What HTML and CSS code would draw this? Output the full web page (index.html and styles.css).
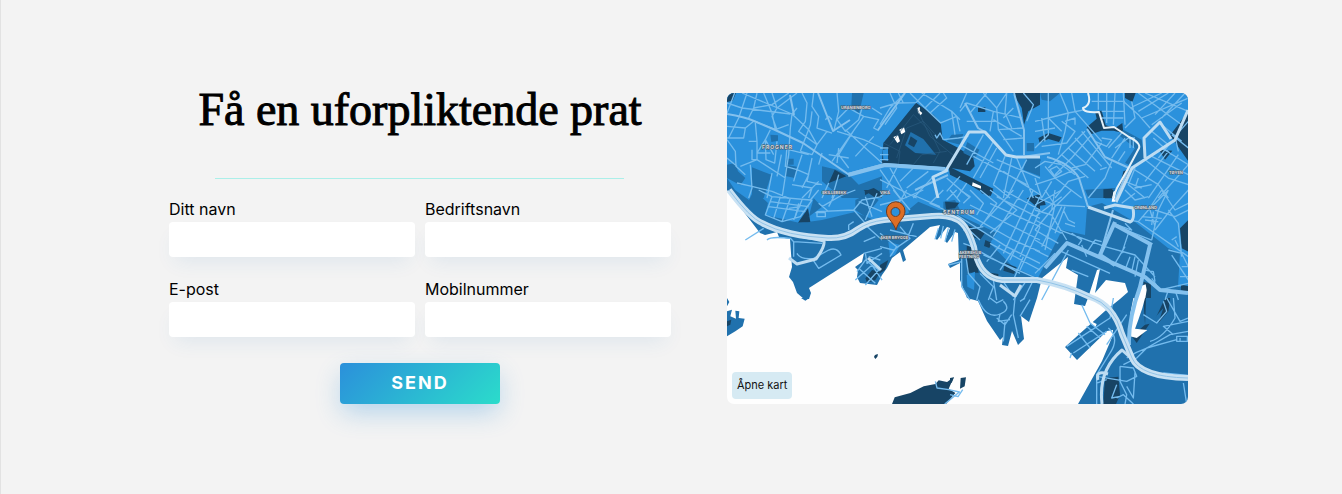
FILE: index.html
```html
<!DOCTYPE html>
<html lang="no">
<head>
<meta charset="utf-8">
<meta name="viewport" content="width=device-width, initial-scale=1">
<title>Få en uforpliktende prat</title>
<link rel="stylesheet" href="styles.css">
</head>
<body>
<main class="contact">
  <section class="contact-main">
    <h1 class="title">Få en uforpliktende prat</h1>
    <hr class="rule">
    <form class="form">
      <div class="fields">
        <div class="field"><label for="name">Ditt navn</label><input id="name" type="text"></div>
        <div class="field"><label for="company">Bedriftsnavn</label><input id="company" type="text"></div>
        <div class="field"><label for="email">E-post</label><input id="email" type="email"></div>
        <div class="field"><label for="phone">Mobilnummer</label><input id="phone" type="tel"></div>
      </div>
      <button class="send" type="submit">SEND</button>
    </form>
  </section>
  <section class="map">
    <svg class="map-art" viewBox="727 93 461 311" preserveAspectRatio="xMidYMid slice" role="img" aria-label="Kart over Oslo sentrum">
      <!-- land -->
      <path class="mid" d="M727 93H1188V404H1078L1102 361L1113 335V330L1107 331L1077 360L1065 347L1105 311L1120 299L1128 292L1125 283L1106 280L1095 293L1100 269L1097 270L1088 298L1085 306L1074 304L1078 275L1066 268L1068 257L1042 278L1037 298L1029 322L1021 316L1024 339L1018 345L1012 331L1008 346L1002 345L1003 337L1000 340L987 321L978 301L967 298L960 280V263L950 268L948 264L959 260L958 233L955 232L947 243L945 241L950 228L947 227L937 240L935 238L940 225L930 227L903 250L906 260L903 262L900 252L892 258L887 268L882 275L877 285L860 283L857 277L858 270L855 267L862 262L864 253L809 288L811 293L809 299H804L797 293L793 282L789 277L792 267L790 239L779 237L777 232L765 235L760 233L727 190Z"/>
      <path class="light" d="M727 93H1188V287H1178L1180 253L1168 248L1135 222L1102 203L1087 207L1085 235L1062 230L1038 278L1013 267L990 243L997 233L965 218L950 210L920 210L895 217L879 222L855 212L822 220L800 223L765 215L768 203L754 190L749 200L735 190L727 178Z"/>

      <!-- parks and blocks -->
      <g transform="translate(722 88) scale(.3334)">
        <path class="mid" d="M90 238L148 260L125 330H90ZM192 230L224 236L218 270L190 264ZM145 140L168 142V158L148 162ZM300 235L345 245L385 265L410 290L480 265V330H360L300 280ZM390 15H425L410 80L388 50ZM15 230L40 225L48 250L70 270L55 292L15 270ZM195 212H215V230H192Z"/>
        <path class="dark" d="M338 245L373 265L320 285ZM428 310L455 300L480 315V330H430ZM15 15H42L32 38L15 42Z"/>
      </g>
      <g transform="translate(880 88) scale(.3334)">
        <path class="dark" d="M108 44L160 80L182 105L188 155L235 180L280 210L284 235L270 250L200 238L5 230L10 165Z"/>
        <path class="mid" d="M92 132L130 153L168 200L106 195L75 172ZM215 140L250 138L240 170L200 160ZM262 162L298 185L285 212L250 195ZM440 205H480V265L430 245ZM440 165H462V190H440Z"/>
        <path class="dark" d="M92 145L112 158L102 178L84 168Z"/>
        <path class="light" d="M8 185L24 182V218L10 215Z"/>
        <path class="dark" d="M205 235L340 302L325 325L260 285L210 260ZM398 15H480V50L445 70L432 110L425 60ZM294 58H316V72H294Z"/>
        <path class="white" d="M112 60L120 57L119 68L127 75L122 82L114 74ZM58 125L72 118L76 132L64 139ZM40 147L54 142L60 160L52 165ZM278 283L303 294V302L276 293Z"/>
        <path class="thin dim" d="M30 170L100 80L150 130L180 190L160 225M50 210L80 120L130 100L175 150M10 165L60 190L55 230M110 60L150 145L230 210M100 230L125 200L200 190"/>
      </g>
      <g transform="translate(1035 88) scale(.3334)">
        <path class="dark" d="M460 70V220L405 142ZM155 118L185 92L180 70L200 68L212 112L240 120L262 105L265 135L235 128L200 128L170 138ZM10 150L40 135L80 148L72 162L40 153L14 165ZM270 15H302L292 42L270 30ZM372 185L412 188L390 215ZM265 250L290 240L258 305L248 320ZM0 15L8 40L0 55Z"/>
        <path class="mid" d="M265 125L320 155L328 210L290 235L270 225L300 180L250 140ZM150 305L240 300L235 330H160ZM15 15H75L45 40L20 35ZM0 205L18 215L0 255Z"/>
        <path class="dark" d="M205 304L232 302L228 330H205Z"/>
      </g>
      <g transform="translate(722 190) scale(.3334)">
        <path class="dark" d="M258 55L265 96L228 98ZM425 0H465L448 22ZM430 265L450 240L475 245L460 270L435 278Z"/>
        <path class="mid" d="M275 25L300 50L260 80ZM400 30L440 10L470 30L430 80L400 60Z"/>
      </g>
      <g transform="translate(880 190) scale(.3334)">
        <path class="mid" d="M85 60L115 35L175 60L160 80L90 85ZM0 100L100 90L75 150H0ZM190 35L225 30L240 60L190 65Z"/>
        <path class="dark" d="M245 98L315 128L300 150L255 130ZM260 165H282L296 248H262ZM316 150L334 158L328 174L312 168ZM375 218L410 232L402 252L370 242ZM332 248L355 252V272L325 262ZM302 0H340L332 18L305 10ZM440 25L480 12V60ZM0 225L25 210L15 240L0 250ZM195 35L238 38L225 55L198 58Z"/>
        <path class="light" d="M260 255L285 245L282 300L262 290ZM25 155L60 165L45 195L30 200Z"/>
      </g>
      <g transform="translate(1035 190) scale(.3334)">
        <path class="dark" d="M208 0H235V25H210ZM435 115L460 90V185L440 175ZM5 32L28 28L32 45L8 48ZM325 275L348 282V330H330ZM438 284L460 288V308L438 300Z"/>
        <path class="white" d="M235 5L242 2L240 35H230ZM318 288L332 283L335 300L330 330H300Z"/>
      </g>
      <g transform="translate(950 298) scale(.3334)">
        <path class="dark" d="M580 0H660L655 40L625 75L640 30L600 75L560 135L545 115L585 80ZM465 240L505 236L510 290L498 318H460Z"/>
        <path class="mid" d="M588 0H645L610 75L585 80Z"/>
        <path class="white" d="M550 0H585L577 30L565 65L555 92L592 96L560 120L540 115L540 50ZM420 68L440 78L436 88L424 78Z"/>
        <path class="dark" d="M32 240L48 238L44 265L30 272ZM0 240L12 238L5 255L0 250Z"/>
      </g>
      <g transform="translate(722 298) scale(.3334)">
        <path class="mid" d="M15 0L22 12L15 25ZM15 40L30 35L25 55L42 62L40 38L52 40L50 60L68 62L62 85L40 100L15 115ZM237 0H262L250 8Z"/>
        <path class="dark" d="M15 70L28 65L25 80L15 85ZM456 177Q458 168 468 169L466 176L460 183ZM510 318L518 298L565 285L605 265L640 258L650 247L675 252L695 238L680 272L700 285L672 318Z"/>
        <path class="thin" d="M640 250L645 270L680 275L712 282L668 318M684 290L708 296L722 275"/>
      </g>

      <!-- small streets -->
      <g class="thin">
        <g transform="translate(722 88) scale(.3334)">
          <path d="M38 15L15 75M75 15L50 90L20 150M105 15L95 60L80 90M125 15L150 75L160 125M15 45L60 60L205 78M60 15L210 78M150 15L165 60L225 15M100 100L160 125L200 110M95 60L150 50L200 15M100 105L105 160V215M80 160H105M90 185V215H105M130 155L105 195H145M130 155L132 215L158 225L165 160M15 115L70 120L95 100M15 150H65L70 120M15 155L40 190L42 235L70 260M165 60L150 85L165 125M210 78L205 120L200 200L180 330M210 78L260 125L285 170L270 200L235 190M225 60L210 78M240 15L255 45L250 100L230 130L285 170M270 70L265 110L235 190M275 15L270 55L290 85L285 120L330 135M310 95L320 85L330 95M315 130L285 170M345 15L350 70L335 130M425 85L380 60L345 95L370 130L410 95L420 60M425 85L470 95L455 120L470 128M345 130L425 155L480 180M425 85L330 220M450 60L480 80M370 125L430 180L480 225M400 120L350 200L380 240M455 145L400 205M300 195L290 230M320 200L380 210M350 180L345 225M195 175L190 235L225 245M225 245L215 280M240 200L225 245L260 260L240 300M270 210L255 280L300 290M200 185L260 200M85 230L90 300L80 330M150 255L135 330M178 200L165 265M55 235L105 215L190 270M45 285L90 295L150 310L200 330M210 290L270 300L260 330M290 280L240 330M320 285L300 330M350 260L330 330M15 210L45 235M145 125L130 155L155 200"/>
        </g>
        <g transform="translate(880 88) scale(.3334)">
          <path d="M0 110L30 60L75 15M0 60L50 45L108 44M30 15L50 60L15 110M55 15L70 45M90 15L135 60L182 105M108 44L135 15M135 60L180 15M125 15L215 70L240 95M150 75L200 30L190 15M180 105L230 85L240 130M215 70L225 140M240 70L260 45L340 70L425 90M260 15L240 60M270 75L320 15M310 15L350 60L380 15M340 70L330 130M350 60L355 125L430 120M380 15L375 75L395 120M400 60L370 90M340 95L425 145M260 100L345 100M355 125L400 190M370 155L430 150M430 15L460 50L440 100M190 155L235 150L265 145M340 160L300 235M310 140L260 230M240 170L340 225M280 205L440 290M350 180L300 270M375 205L340 290M395 210L370 330M410 210L460 330M440 215L380 330M300 235L280 270M370 250L480 320M350 215L480 270M340 290L390 330M0 245L60 330M30 240L80 330M50 240L20 300M60 280L100 240M80 300L145 250M100 330L160 265M200 270L270 330M200 310L240 265M230 330L260 285"/>
          <path d="M0 275L110 330M0 180H25M0 200H25M0 215H25M165 140L170 150L180 135L190 155"/>
        </g>
        <g transform="translate(1035 88) scale(.3334)">
          <path d="M0 100L40 90L100 75L150 65M40 15V140L0 180M75 15L100 75L90 130L70 200M110 15L120 70L200 160M80 100L120 130L95 165L20 175M90 100L120 90V110M40 90L80 130M20 90L30 160M0 130L60 120M190 15V65M215 15V105M240 15L235 110M265 15L270 110M170 40H270M200 70H270M200 90H265M265 40L310 80L345 120M290 40L300 90L270 120M285 60L380 15M310 15L440 110M330 15L460 70M310 70L400 15M320 90L460 30M350 110L440 45M380 110L440 160M355 150L410 200M350 130L400 170M420 15L360 80M450 15L380 90M150 130L90 190L40 240M170 140L110 210L60 260M200 165L150 230L110 240M140 130L230 240M120 150L200 235M100 180L180 250M80 200L160 270M60 215L120 260M200 150L230 155L215 175L180 160M260 135L220 180M270 150L230 210M285 150V180M295 150V180M240 180L280 150H300M250 220L270 190M230 220L210 270L160 330M290 240L370 290L400 330M330 215L400 270L460 290M350 205L460 260M380 180L460 230M400 190L330 280M430 200L340 330M460 230L370 330M410 160L370 210M300 240L280 290L330 330M310 270L300 300L350 290M270 280L320 300M0 240L30 220L80 230M30 235L60 270L130 240M45 245L65 235L80 250L60 265ZM0 290L60 270L140 330M20 330L50 280M60 330L100 280L150 265M195 245L215 238M0 270L20 330M410 140L460 180M460 100L420 145L430 190"/>
        </g>
        <g transform="translate(722 190) scale(.3334)">
          <path d="M110 0L150 20L265 30L290 0M150 20L130 75L180 95L235 80L270 30M175 20L155 85M205 25L180 95M240 30L215 90M140 50L250 65M145 35L260 50M280 68H310V80H285V65L395 60M300 50L360 15L400 0M290 40L320 65M340 10L320 50M395 60L420 30L480 20M395 60L430 100M410 35L480 65M430 20L450 80M465 10L430 90M70 150L125 115M135 150Q145 138 205 145L215 155V200M225 190Q235 210 275 205L320 180Q345 170 357 195L290 235L270 205M380 120V105L395 95M430 105L480 150M425 155L460 140M215 155L300 160M430 190L435 220L480 190M405 245L430 210L470 240L430 285M400 270L450 225L480 270M410 235L460 280M440 200L475 210"/>
          <path d="M200 55L235 50M220 80L230 40M425 190L480 175"/>
        </g>
        <g transform="translate(880 190) scale(.3334)">
          <path d="M0 45L60 30L130 0M40 0L90 60M80 0L50 50M0 20L30 0M100 15L180 50M190 0L150 40L195 60M210 0L240 35M230 0L200 30M250 40L270 20L240 0M270 0L310 40L290 75M300 0L350 40L310 100M330 0L410 60L330 130M370 0L480 60M400 0L300 110M430 0L340 140M460 0L370 190M480 20L390 210M480 60L420 200M480 110L420 240M250 65L400 150L480 185M270 45L480 150M230 75L380 170L480 220M330 40L480 110M350 20L480 85M330 160L480 240M300 185L420 250M360 165L320 215M400 180L360 240M430 200L400 270M310 195L470 265M240 95L300 150M250 120L310 110M250 160L290 175M245 200V290L270 330M255 180L265 250L300 290L290 330M300 250L340 290L325 330M340 270L350 330M370 275L400 320M440 270L400 330M460 270L430 330M0 130L50 170L30 200M30 120L110 140M60 110L90 145L40 180M100 100L80 150M0 170L40 180M175 115L165 148M190 108L182 145M205 115L195 155M225 118L215 155M205 225L245 215"/>
        </g>
        <g transform="translate(1035 190) scale(.3334)">
          <path d="M0 60L50 75L95 150M0 20L60 45L150 50M30 0L60 45L30 180M60 0L50 60M0 90L80 130M0 120L70 160M0 150L50 180M0 180L40 200M80 50L20 170M90 50L60 130M110 0L50 60L0 120M80 20L0 80M80 0L0 45M85 60L100 90L120 100M90 100L120 110M75 120L210 170L300 195L360 260M110 130L140 150L130 165M80 185L225 250M140 165L155 200M270 170L240 220M285 200L270 240M300 200L290 245M310 210L300 260M330 220L320 265M160 180L180 150L200 155M235 105L350 150M280 130L260 190M235 100L290 120L270 100M250 85L310 95L460 200M310 95L340 60L380 0M340 60L400 0M320 80L380 85M330 90L370 95M345 60L360 110M355 65L350 105M380 0L420 60L460 40M400 0L370 60L350 150M270 0L300 30L340 20M260 40L300 10M400 60L430 100L440 200M360 120L410 55L460 0M460 60L420 80L360 60M410 150L425 140M420 150L430 170M400 180L440 190L460 230M410 195L460 270M440 230H460M435 260H460M330 240L355 245L360 275M350 265L375 300L460 280M400 300L390 330M420 300L430 330M110 240L160 260M100 180L20 330M60 190L0 250"/>
        </g>
        <g transform="translate(950 298) scale(.3334)">
          <path d="M85 5Q110 65 150 48Q185 35 160 10M120 0L140 15L160 5M150 48L145 70L180 65M140 60L165 80L185 50M165 70L160 130M195 0L190 50L205 120M210 10L225 0M240 5L210 55M395 20L420 75L465 110M350 145L480 60L490 0M370 165L470 100M385 105L420 150M410 85L450 120M360 180L365 165M475 90Q510 120 480 165L440 230V318M600 130Q640 120 675 60L670 0M590 150L660 110L714 100M560 180L590 150L680 125V115H714M680 115V130H712V115M690 130V120M640 225L714 232M670 110L640 85L714 70M650 0L690 70L714 60M580 50L620 75L650 40L640 10M520 200L560 180M510 205V250L530 290L525 318M555 220L550 300L530 265M440 235L530 250L560 235L550 210L510 205M440 255L470 245M500 260L485 300L510 295M700 255L710 318M530 180Q560 160 590 150M500 300L520 290L550 318M470 140L530 50"/>
        </g>
      </g>

      <!-- main roads -->
      <g class="road">
        <path d="M727 114Q745 117 754 121L773 129L803 143L848 174L885 164L942 168M818 93L833 131L850 120M905 93L878 130M965 103L978 128L985 132M1014 93L1024 130V155M1087 129L1105 157L1129 168M1047 157Q1070 163 1079 178L1088 207M1129 168L1115 200M1022 157L1050 153M915 190L948 175M790 95L794 115M1113 210L1100 255"/>
        <path class="wide" d="M1045 268L1067 243L1145 277L1160 290L1188 293M1115 222L1100 255L1115 265M1150 245L1140 287Q1128 320 1129 345M1152 245L1115 225M848 175L885 165L945 169"/>
      </g>
      <g class="main">
        <path d="M945 172L969 132H985L1006 155L1016 157H1040M948 170L933 177L938 198M1088 207L1130 222Q1135 220 1133 208L1115 205L1104 208M1116 202L1132 168L1175 140L1188 110M1145 158L1144 138L1160 122L1171 139"/>
        <path d="M789 258L797 264L816 259Q825 247 824 241L795 235M868 258L881 270M1021 285L1015 296L1000 285M1102 404Q1098 370 1122 350L1133 360M1098 380Q1095 370 1108 374"/>
        <path class="river" d="M1088 93Q1092 105 1083 108Q1083 113 1099 112L1104 128L1114 127L1129 137Q1143 144 1138 150L1129 167L1117 188L1113 198"/>
      </g>
      <path class="highway" d="M729 190Q750 218 762 223Q786 236 828 238Q845 239 858 229Q868 222 884 220L932 216C962 213 968 228 974 247Q979 278 1002 280H1037Q1065 285 1090 297Q1114 305 1122 334L1132 358Q1140 377 1188 378"/>
      <path class="highway-line" d="M729 190Q750 218 762 223Q786 236 828 238Q845 239 858 229Q868 222 884 220L932 216C962 213 968 228 974 247Q979 278 1002 280H1037Q1065 285 1090 297Q1114 305 1122 334L1132 358Q1140 377 1188 378"/>

      <!-- place names -->
      <g class="place">
        <text x="762" y="149" class="big">FROGNER</text>
        <text x="841" y="109">URANIENBORG</text>
        <text x="822" y="194">SKILLEBEKK</text>
        <text x="880" y="194">VIKA</text>
        <text x="943" y="214" class="big">SENTRUM</text>
        <text x="880" y="239">AKER BRYGGE</text>
        <text x="959" y="254">AKERSHUS</text>
        <text x="959" y="258">FESTNING</text>
        <text x="1134" y="209">GRØNLAND</text>
        <text x="1169" y="174">TØYEN</text>
      </g>
      <path class="pin" fill-rule="evenodd" d="M896 230C893 221 886 218 886.500 211A9 9 0 0 1 905 211C905 218 898 221 896 230ZM900 212A4.500 4.500 0 1 0 891 212A4.500 4.500 0 1 0 900 212Z"/>
    </svg>
    <a class="map-link" href="#kart">Åpne kart</a>
  </section>
</main>
</body>
</html>
```
FILE: styles.css
```css
* { box-sizing: border-box; }

body {
  margin: 0;
  background: #f3f3f3;
  color: #000;
  font-family: Inter, Roboto, sans-serif;
}

.contact {
  min-height: 100vh;
  padding: 78px 154px 90px 168px;
  border-left: 1px solid #e2e2e2;
  display: grid;
  grid-template-columns: 502fr 461fr;
  gap: 56px;
  align-items: end;
  align-content: start;
}

.title {
  margin: 0 0 36px;
  font-family: "Liberation Serif", serif;
  font-size: 46px;
  line-height: 64px;
  font-weight: 400;
  text-align: center;
  -webkit-text-stroke: 1px #000;
}

.rule {
  height: 1px;
  margin: 0 47px 20px 46px;
  border: 0;
  background: #abefe9;
}

.form {
  display: flex;
  flex-direction: column;
  align-items: center;
  gap: 26px;
}

.fields {
  width: 100%;
  display: grid;
  grid-template-columns: 1fr 1fr;
  gap: 22px 10px;
}

.field {
  display: flex;
  flex-direction: column;
  gap: 3px;
}

.field label {
  font-size: 16px;
  line-height: 20px;
  font-weight: 400;
}

.field input {
  width: 100%;
  height: 35px;
  padding: 0 10px;
  border: 0;
  border-radius: 4px;
  background: #fff;
  font: inherit;
  box-shadow: 0 10px 20px -6px rgba(43, 116, 190, 0.1);
}

.send {
  width: 160px;
  height: 41px;
  padding: 0 0 2px;
  border: 0;
  border-radius: 4px;
  background: linear-gradient(135deg, #2b90db, #2bdccb);
  color: #fff;
  font: 700 18px/24px Inter, sans-serif;
  letter-spacing: 2px;
  box-shadow: 0 10px 26px -2px rgba(43, 144, 219, 0.32);
}

.map {
  position: relative;
  border-radius: 7px;
  overflow: hidden;
  background: #fefefe;
}

.map-art {
  display: block;
  width: 100%;
  aspect-ratio: 461 / 311;
}

.map-link {
  position: absolute;
  left: 5px;
  bottom: 5px;
  padding: 5px;
  border-radius: 4px;
  background: #d6eaf3;
  color: #111;
  font-size: 11px;
  line-height: 17px;
  text-decoration: none;
}

.light { fill: #2b91dc; }
.mid { fill: #2071ad; }
.dark { fill: #174465; }
.white { fill: #fefefe; }

.thin,
.road,
.main,
.highway,
.highway-line {
  fill: none;
  stroke-linejoin: round;
}

.thin { stroke: #74bbee; stroke-width: 4px; }
.dim { stroke: #2b5c80; stroke-width: 2px; }
.road { stroke: #84c1ee; stroke-width: 2px; }
.wide { stroke-width: 4px; }
.main { stroke: #bddcf2; stroke-width: 3px; }
.river { stroke: #e4f1f9; stroke-width: 2px; }
.highway { stroke: #c8e1f3; stroke-width: 6px; }
.highway-line { stroke: #91c3e7; stroke-width: 1px; }

.place {
  fill: #d3dce3;
  stroke: #4b5a66;
  stroke-width: 1px;
  paint-order: stroke;
  font: 700 4px Inter, sans-serif;
  letter-spacing: 0;
}

.place .big { font-size: 5px; letter-spacing: 1px; }

.pin { fill: #dc6e25; stroke: #6f3b20; stroke-width: 1px; }
```
